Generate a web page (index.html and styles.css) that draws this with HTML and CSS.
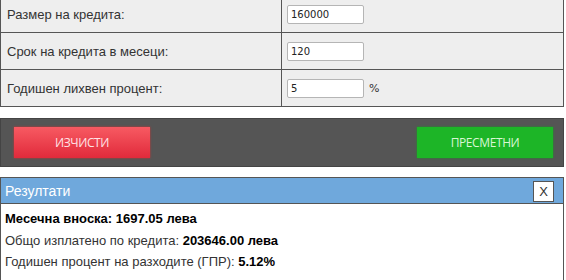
FILE: index.html
```html
<!DOCTYPE html>
<html lang="bg">
<head>
<meta charset="utf-8">
<link rel="stylesheet" href="styles.css">
</head>
<body>
<div class="page">
  <table class="form">
    <tr>
      <td class="label">Размер на кредита:</td>
      <td class="field"><input class="inp" type="text" value="160000"></td>
    </tr>
    <tr>
      <td class="label">Срок на кредита в месеци:</td>
      <td class="field"><input class="inp" type="text" value="120"></td>
    </tr>
    <tr>
      <td class="label">Годишен лихвен процент:</td>
      <td class="field"><input class="inp" type="text" value="5"><span class="pct">%</span></td>
    </tr>
  </table>

  <div class="actions">
    <button class="btn btn-red">ИЗЧИСТИ</button>
    <button class="btn btn-green">ПРЕСМЕТНИ</button>
  </div>

  <div class="results">
    <div class="res-head">
      <span class="res-title">Резултати</span>
      <span class="close">X</span>
    </div>
    <div class="res-body">
      <p class="line strong">Месечна вноска: 1697.05 лева</p>
      <p class="line">Общо изплатено по кредита: <b>203646.00 лева</b></p>
      <p class="line">Годишен процент на разходите (ГПР): <b>5.12%</b></p>
    </div>
  </div>
</div>
</body>
</html>
```

FILE: styles.css
```css
html, body {
  margin: 0;
  padding: 0;
  background: #fff;
}
body {
  font-family: Arial, "Liberation Sans", sans-serif;
  font-size: 13px;
  color: #333;
  overflow: hidden;
}
.page {
  width: 564px;
  margin-top: -5px;
}
.form {
  width: 564px;
  border-collapse: collapse;
  background: #eeeeee;
}
.form td {
  border: 1px solid #555;
  height: 37px;
  padding: 0;
  box-sizing: border-box;
}
.label {
  width: 281px;
  padding-left: 6px !important;
  color: #333;
}
.field {
  padding-left: 5px !important;
}
.inp {
  width: 77px;
  height: 19px;
  box-sizing: border-box;
  border: 1px solid #b5b5b5;
  border-radius: 2px;
  padding: 0 3px;
  font-family: "DejaVu Sans", sans-serif;
  font-size: 10px;
  color: #222;
  background: #fff;
  vertical-align: middle;
  margin: 0;
}
.pct {
  margin-left: 5px;
  font-family: "DejaVu Sans", sans-serif;
  font-size: 11px;
  color: #333;
  vertical-align: middle;
}
.actions {
  margin-top: 11px;
  height: 49px;
  box-sizing: border-box;
  background: #555;
  border: 1px solid #444;
  display: flex;
  align-items: center;
  justify-content: space-between;
  padding: 0 10px 0 13px;
}
.btn {
  width: 136px;
  height: 31px;
  border: none;
  padding: 0;
  font-family: "Open Sans", sans-serif;
  font-size: 12px;
  letter-spacing: -0.4px;
  cursor: pointer;
}
.btn-red {
  background: linear-gradient(#f75a62, #e12a3b);
  color: #ffe3e6;
  box-shadow: 0 0 2px #c33;
}
.btn-green {
  background: #1db527;
  color: #d9f7d5;
  box-shadow: 0 0 2px #1a9a22;
}
.results {
  margin-top: 10px;
  border: 1px solid #555;
  border-bottom: none;
  height: 102px;
}
.res-head {
  background: #6fa8dc;
  height: 25px;
  border-bottom: 1px solid #555;
  display: flex;
  align-items: center;
  justify-content: space-between;
  padding-left: 4px;
  position: relative;
}
.res-title {
  color: #fff;
  font-size: 14px;
}
.close {
  position: absolute;
  right: 9px;
  top: 3px;
  width: 21px;
  height: 21px;
  box-sizing: border-box;
  background: #fff;
  border: 1px solid #555;
  font-size: 13px;
  color: #333;
  display: flex;
  align-items: center;
  justify-content: center;
}
.res-body {
  padding: 4px 4px 0;
}
.line {
  margin: 0;
  line-height: 21.5px;
  color: #333;
}
.line b, .strong {
  color: #000;
  font-weight: bold;
}
```
